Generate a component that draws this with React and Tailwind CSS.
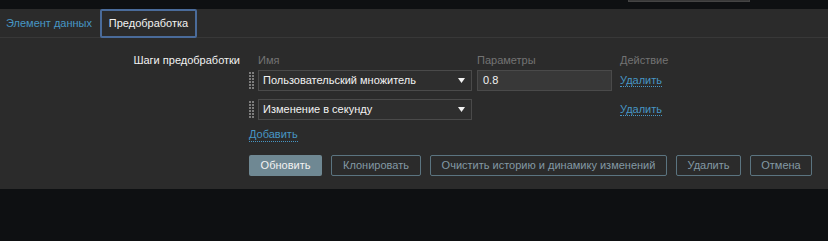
import React from "react";

function Handle() {
  const dots = [];
  for (let r = 0; r < 6; r++) {
    for (let c = 0; c < 2; c++) {
      dots.push(<rect key={r + "-" + c} x={c * 3} y={r * 3} width="2" height="2" fill="#7d7d7d" />);
    }
  }
  return (
    <svg width="5" height="18" viewBox="0 0 5 18" className="block">
      {dots}
    </svg>
  );
}

function Select({ children }) {
  return (
    <div className="flex h-[21px] w-[214px] items-center justify-between border border-[#4a4a4a] bg-[#2e2e2e] pl-[4px] pr-[6px] text-[#f2f2f2]">
      <span>{children}</span>
      <svg width="7" height="5" viewBox="0 0 7 5" className="block">
        <path d="M0 0 H7 L3.5 5 Z" fill="#f2f2f2" />
      </svg>
    </div>
  );
}

function Link({ children }) {
  return (
    <span className="border-b border-dotted border-[#4796c4] leading-[14px] text-[#4796c4]">{children}</span>
  );
}

export default function App() {
  return (
    <div
      className="h-[241px] w-[828px] bg-[#0e1012] text-[11px]"
      style={{ fontFamily: '"Liberation Sans", Arial, sans-serif' }}
    >
      <div className="flex h-[9px] justify-end pr-[78px]">
        <div className="h-[2px] w-[122px] border-x border-b border-[#444] bg-[#383838]" />
      </div>
      <div className="h-[180px] bg-[#2b2b2b]">
        <div className="flex h-[29px] border-b border-[#383838]">
          <div className="flex w-[100px] items-center pl-[6px] text-[#4796c4]">Элемент данных</div>
          <div className="flex h-[29px] w-[97px] items-center justify-center rounded-[2px] border-2 border-[#4a6b9a] text-[#f2f2f2]">
            Предобработка
          </div>
        </div>
        <div className="flex pt-[14px]">
          <div className="w-[240px] text-right leading-[16px] text-[#f2f2f2]">Шаги предобработки</div>
          <div className="ml-[9px] flex flex-col">
            <div className="flex h-[16px] items-center leading-[16px] text-[#737373]">
              <div className="w-[9px]" />
              <div className="w-[219px]">Имя</div>
              <div className="w-[143px]">Параметры</div>
              <div>Действие</div>
            </div>
            <div className="mt-[2px] flex h-[21px] items-center">
              <div className="w-[9px]"><Handle /></div>
              <Select>Пользовательский множитель</Select>
              <div className="ml-[5px] flex h-[21px] w-[135px] items-center border border-[#4a4a4a] bg-[#383838] px-[5px] text-[#f2f2f2]">
                0.8
              </div>
              <div className="ml-[8px]"><Link>Удалить</Link></div>
            </div>
            <div className="mt-[8px] flex h-[21px] items-center">
              <div className="w-[9px]"><Handle /></div>
              <Select>Изменение в секунду</Select>
              <div className="ml-[148px]"><Link>Удалить</Link></div>
            </div>
            <div className="mt-[6px] flex h-[16px] items-center">
              <Link>Добавить</Link>
            </div>
            <div className="mt-[13px] flex gap-[9px]">
              <button className="h-[21px] w-[73px] rounded-[2px] bg-[#6f8893] text-[#f2f2f2]">Обновить</button>
              <button className="h-[21px] w-[90px] rounded-[2px] border border-[#5b7480] text-[#8399a4]">Клонировать</button>
              <button className="h-[21px] w-[237px] rounded-[2px] border border-[#5b7480] text-[#8399a4]">Очистить историю и динамику изменений</button>
              <button className="h-[21px] w-[65px] rounded-[2px] border border-[#5b7480] text-[#8399a4]">Удалить</button>
              <button className="h-[21px] w-[62px] rounded-[2px] border border-[#5b7480] text-[#8399a4]">Отмена</button>
            </div>
          </div>
        </div>
      </div>
    </div>
  );
}
